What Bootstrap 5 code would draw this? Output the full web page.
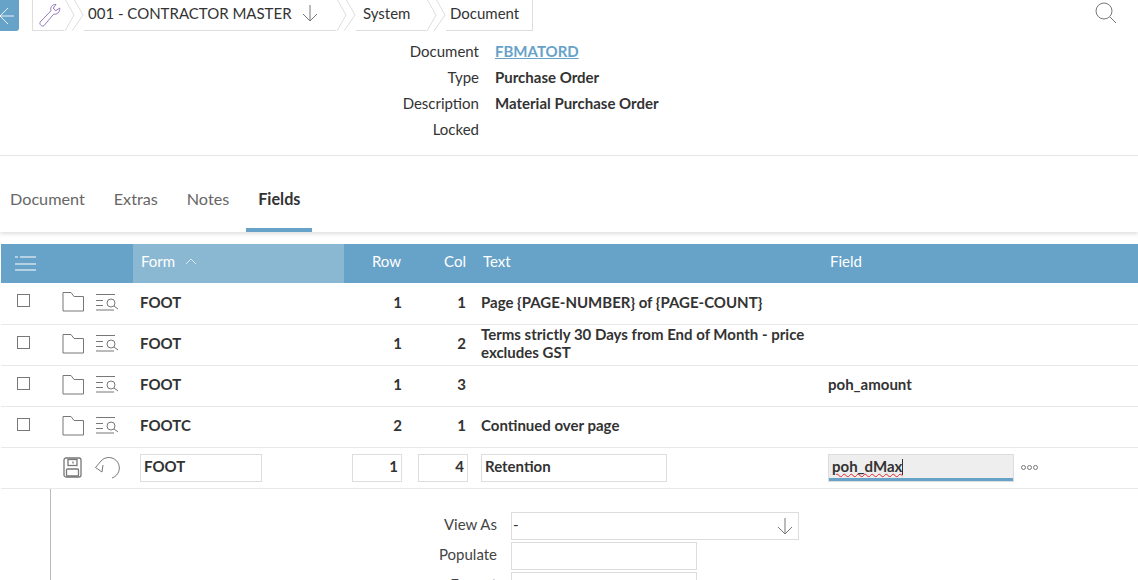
<!DOCTYPE html>
<html lang="en">
<head>
    <meta charset="UTF-8">
    <meta name="viewport" content="width=device-width, initial-scale=1.0">
    <title>Document</title>
    <link href="https://cdn.jsdelivr.net/npm/bootstrap@5.3.0/dist/css/bootstrap.min.css" rel="stylesheet">
    <style>
        html, body { height: 580px; overflow: hidden; }
        body { font-family: Lato, "Liberation Sans", sans-serif; font-size: 15px; color: #333; background: #fff; }
        svg { display: block; fill: none; stroke: #777; stroke-width: 1; }

        .top-bar { height: 31px; }
        .back-btn { width: 19px; height: 31px; background: #67a2c8; border-bottom-right-radius: 3px; }
        .back-btn svg { stroke: rgba(255, 255, 255, .85); }
        .crumbs { height: 31px; margin-left: 13px; }
        .crumb { height: 31px; border-bottom: 1px solid #ddd; line-height: 26px; white-space: nowrap; }
        .crumb-tool { width: 32px; padding-left: 4px; padding-top: 2px; border-left: 1px solid #ddd; }
        .crumb-master { width: 252px; padding: 0 0 4px 4px; }
        .crumb-master svg { margin-left: 9px; }
        .crumb-system { width: 70px; padding-left: 7px; }
        .crumb-doc { width: 87px; padding-left: 4px; border-right: 1px solid #ddd; }
        .crumb-sep { width: 20px; height: 31px; }
        .crumb-sep svg { stroke: #ddd; }
        .search-btn { margin-right: 21px; margin-top: 1px; }

        .doc-info { height: 125px; border-bottom: 1px solid #e8e8e8; padding-top: 7px; }
        .info-row { height: 26px; line-height: 26px; }
        .info-label { width: 479px; text-align: right; }
        .info-value { margin-left: 16px; font-weight: 700; }
        .info-value a { color: #67a2c8; }

        .tab-strip { height: 76px; padding-left: 10px; padding-top: 28px; gap: 29px; font-size: 16.200px; box-shadow: 0 2px 4px rgba(0, 0, 0, .13); }
        .tab-link { color: #666; line-height: 30px; height: 48px; }
        .tab-link.on { color: #333; font-weight: 700; border-bottom: 4px solid #67a2c8; margin-left: -12px; padding: 0 12px; }

        .grid-wrap { margin: 12px 0 0 1px; }
        .field-grid { table-layout: fixed; width: 1137px; border-collapse: collapse; margin: 0; }
        .field-grid th { height: 39px; background: #67a2c8; color: #fff; font-weight: 400; padding: 0 8px 4px; }
        .field-grid th.sorted { background: #8ab7d2; padding-bottom: 6px; }
        .field-grid th.num { text-align: right; padding-right: 10px; }
        .field-grid th.col-head { padding-right: 9px; }
        .field-grid td { height: 41px; padding: 0 8px 3px 7px; border-bottom: 1px solid #e8e8e8; font-weight: 700; line-height: 18px; vertical-align: middle; }
        .field-grid td.num { text-align: right; padding-right: 9px; }
        .field-grid td.text-cell { padding-left: 6px; }
        .field-grid tr.edit-row td { padding-bottom: 0; }
        .menu-icon { margin: 4px 0 0 3px; stroke: #b5d2e4; stroke-width: 2; }
        .tick-box { width: 13px; height: 13px; border: 1px solid #777; margin: -2px 0 0 9px; }
        .row-icons { margin-left: 3px; gap: 10px; }
        .edit-icons { margin-left: 5px; gap: 13px; }
        .edit-icons .save-icon { stroke-width: 1.3; }
        .sort-mark { margin-left: 6px; display: inline-block; vertical-align: 2px; }
        .sort-mark svg { stroke: #dbe8f1; display: inline; }
        .cell-input { height: 28px; border: 1px solid #ddd; padding: 0 3px; line-height: 23px; font-weight: 700; background: #fff; }
        .cell-input.col-input { margin-right: 1px; }
        .cell-input.active { width: 186px; background: #eee; box-shadow: inset 0 -3px 0 #67a2c8; }
        .spell { text-decoration: underline wavy #e3242b 1px; text-underline-offset: 1px; }
        .caret-bar { display: inline-block; width: 1px; height: 16px; background: #333; vertical-align: -3px; }
        .dots { gap: 1px; margin-left: 7px; }
        .dots span { width: 5px; height: 5px; border: 1px solid #777; border-radius: 50%; }

        .detail-panel { margin-left: 49px; border-left: 1px solid #bbb; height: 100px; padding-top: 23px; }
        .detail-row { height: 30px; }
        .detail-label { width: 446px; text-align: right; line-height: 25px; color: #444; }
        .detail-input { margin-left: 14px; width: 186px; height: 28px; border: 1px solid #ddd; padding: 0 4px 0 1px; line-height: 24px; }
        .detail-input.wide { width: 288px; }
        .dash-value { padding-bottom: 4px; }
    </style>
</head>
<body>
    <div class="top-bar d-flex align-items-start">
        <div class="back-btn d-flex align-items-center">
            <svg width="19" height="20" viewBox="0 0 19 20"><path d="M0 10H14M0 10L8 2M0 10L8 18"/></svg>
        </div>
        <div class="crumbs d-flex">
            <div class="crumb crumb-tool">
                <svg width="26" height="26" viewBox="0 0 26 28" style="stroke:#8a6fb5"><path d="M2.500 21.500L14 9.500C13 6 15 2.500 19.500 2.500L16.500 6.500L19 9.500L23.500 6.500C24 11 20 14 17 13L6.500 25.500C4.500 27 1 24 2.500 21.500Z"/></svg>
            </div>
            <div class="crumb-sep"><svg width="20" height="31" viewBox="0 0 20 31"><path d="M1 -1L10 15L1 31M10 -1L19 15L8 31"/></svg></div>
            <div class="crumb crumb-master d-flex align-items-center">001 - CONTRACTOR MASTER
                <svg width="18" height="20" viewBox="0 0 18 20"><path d="M9 2V18M2 11L9 18L16 11"/></svg>
            </div>
            <div class="crumb-sep"><svg width="20" height="31" viewBox="0 0 20 31"><path d="M1 -1L10 15L1 31M10 -1L19 15L8 31"/></svg></div>
            <div class="crumb crumb-system">System</div>
            <div class="crumb-sep"><svg width="20" height="31" viewBox="0 0 20 31"><path d="M1 -1L10 15L1 31M10 -1L19 15L8 31"/></svg></div>
            <div class="crumb crumb-doc">Document</div>
        </div>
        <div class="search-btn ms-auto">
            <svg width="22" height="24" viewBox="0 0 22 24"><circle cx="9" cy="10" r="8"/><path d="M15 16L21 22"/></svg>
        </div>
    </div>

    <div class="doc-info">
        <div class="info-row d-flex"><div class="info-label">Document</div><div class="info-value"><a href="#">FBMATORD</a></div></div>
        <div class="info-row d-flex"><div class="info-label">Type</div><div class="info-value">Purchase Order</div></div>
        <div class="info-row d-flex"><div class="info-label">Description</div><div class="info-value">Material Purchase Order</div></div>
        <div class="info-row d-flex"><div class="info-label">Locked</div><div class="info-value"></div></div>
    </div>

    <div class="tab-strip d-flex">
        <div class="tab-link">Document</div>
        <div class="tab-link">Extras</div>
        <div class="tab-link">Notes</div>
        <div class="tab-link on">Fields</div>
    </div>

    <div class="grid-wrap">
        <table class="field-grid">
            <colgroup><col style="width:50px"><col style="width:82px"><col style="width:211px"><col style="width:67px"><col style="width:64px"><col style="width:347px"><col></colgroup>
            <thead>
                <tr>
                    <th><svg class="menu-icon" width="24" height="16" viewBox="0 0 24 16"><path d="M3 1H6M8 1H24M3 8H24M3 14H24"/></svg></th>
                    <th></th>
                    <th class="sorted">Form <span class="sort-mark"><svg width="12" height="7" viewBox="0 0 12 7"><path d="M1 6L6 1L11 6"/></svg></span></th>
                    <th class="num">Row</th>
                    <th class="num col-head">Col</th>
                    <th>Text</th>
                    <th>Field</th>
                </tr>
            </thead>
            <tbody>
                <tr>
                    <td><div class="tick-box"></div></td>
                    <td><div class="row-icons d-flex align-items-center">
                        <svg width="24" height="21" viewBox="0 0 24 21"><path d="M2 20V1.500H10L13 5.500H22.500V20Z"/></svg>
                        <svg width="24" height="18" viewBox="0 0 24 18"><path d="M1 1.500H20M1 7.500H8M1 12.500H8M1 17H19M12 10A4 4 0 1 0 20 10A4 4 0 1 0 12 10M19 13L23 16"/></svg>
                    </div></td>
                    <td>FOOT</td><td class="num">1</td><td class="num">1</td><td class="text-cell">Page {PAGE-NUMBER} of {PAGE-COUNT}</td><td class="text-cell"></td>
                </tr>
                <tr>
                    <td><div class="tick-box"></div></td>
                    <td><div class="row-icons d-flex align-items-center">
                        <svg width="24" height="21" viewBox="0 0 24 21"><path d="M2 20V1.500H10L13 5.500H22.500V20Z"/></svg>
                        <svg width="24" height="18" viewBox="0 0 24 18"><path d="M1 1.500H20M1 7.500H8M1 12.500H8M1 17H19M12 10A4 4 0 1 0 20 10A4 4 0 1 0 12 10M19 13L23 16"/></svg>
                    </div></td>
                    <td>FOOT</td><td class="num">1</td><td class="num">2</td><td class="text-cell">Terms strictly 30 Days from End of Month - price excludes GST</td><td class="text-cell"></td>
                </tr>
                <tr>
                    <td><div class="tick-box"></div></td>
                    <td><div class="row-icons d-flex align-items-center">
                        <svg width="24" height="21" viewBox="0 0 24 21"><path d="M2 20V1.500H10L13 5.500H22.500V20Z"/></svg>
                        <svg width="24" height="18" viewBox="0 0 24 18"><path d="M1 1.500H20M1 7.500H8M1 12.500H8M1 17H19M12 10A4 4 0 1 0 20 10A4 4 0 1 0 12 10M19 13L23 16"/></svg>
                    </div></td>
                    <td>FOOT</td><td class="num">1</td><td class="num">3</td><td class="text-cell"></td><td class="text-cell">poh_amount</td>
                </tr>
                <tr>
                    <td><div class="tick-box"></div></td>
                    <td><div class="row-icons d-flex align-items-center">
                        <svg width="24" height="21" viewBox="0 0 24 21"><path d="M2 20V1.500H10L13 5.500H22.500V20Z"/></svg>
                        <svg width="24" height="18" viewBox="0 0 24 18"><path d="M1 1.500H20M1 7.500H8M1 12.500H8M1 17H19M12 10A4 4 0 1 0 20 10A4 4 0 1 0 12 10M19 13L23 16"/></svg>
                    </div></td>
                    <td>FOOTC</td><td class="num">2</td><td class="num">1</td><td class="text-cell">Continued over page</td><td class="text-cell"></td>
                </tr>
                <tr class="edit-row">
                    <td></td>
                    <td><div class="edit-icons d-flex align-items-center">
                        <svg class="save-icon" width="19" height="21" viewBox="0 0 19 21"><rect x="1" y="1" width="17" height="19" rx="2"/><rect x="5" y="2.500" width="9" height="6"/><path d="M10 4.500V6.500"/><rect x="3.500" y="12" width="12" height="7" rx="1"/></svg>
                        <svg width="25" height="22" viewBox="0 0 25 22"><path d="M17 21A10.500 10.500 0 1 0 6 4L.5 10.500L7 15M8 8L7 15"/></svg>
                    </div></td>
                    <td><div class="cell-input" style="width:122px">FOOT</div></td>
                    <td class="num"><div class="cell-input ms-auto" style="width:50px">1</div></td>
                    <td class="num"><div class="cell-input col-input ms-auto" style="width:50px">4</div></td>
                    <td class="text-cell"><div class="cell-input" style="width:186px">Retention</div></td>
                    <td class="text-cell"><div class="d-flex align-items-center">
                        <div class="cell-input active"><span class="spell">poh_dMax</span><span class="caret-bar"></span></div>
                        <div class="dots d-flex"><span></span><span></span><span></span></div>
                    </div></td>
                </tr>
            </tbody>
        </table>
        <div class="detail-panel">
            <div class="detail-row d-flex">
                <div class="detail-label">View As</div>
                <div class="detail-input wide d-flex justify-content-between align-items-center"><span class="dash-value">-</span>
                    <svg width="18" height="20" viewBox="0 0 18 20"><path d="M9 2V18M2 11L9 18L16 11"/></svg>
                </div>
            </div>
            <div class="detail-row d-flex">
                <div class="detail-label">Populate</div>
                <div class="detail-input"></div>
            </div>
            <div class="detail-row d-flex">
                <div class="detail-label">Format</div>
                <div class="detail-input"></div>
            </div>
        </div>
    </div>
</body>
</html>
